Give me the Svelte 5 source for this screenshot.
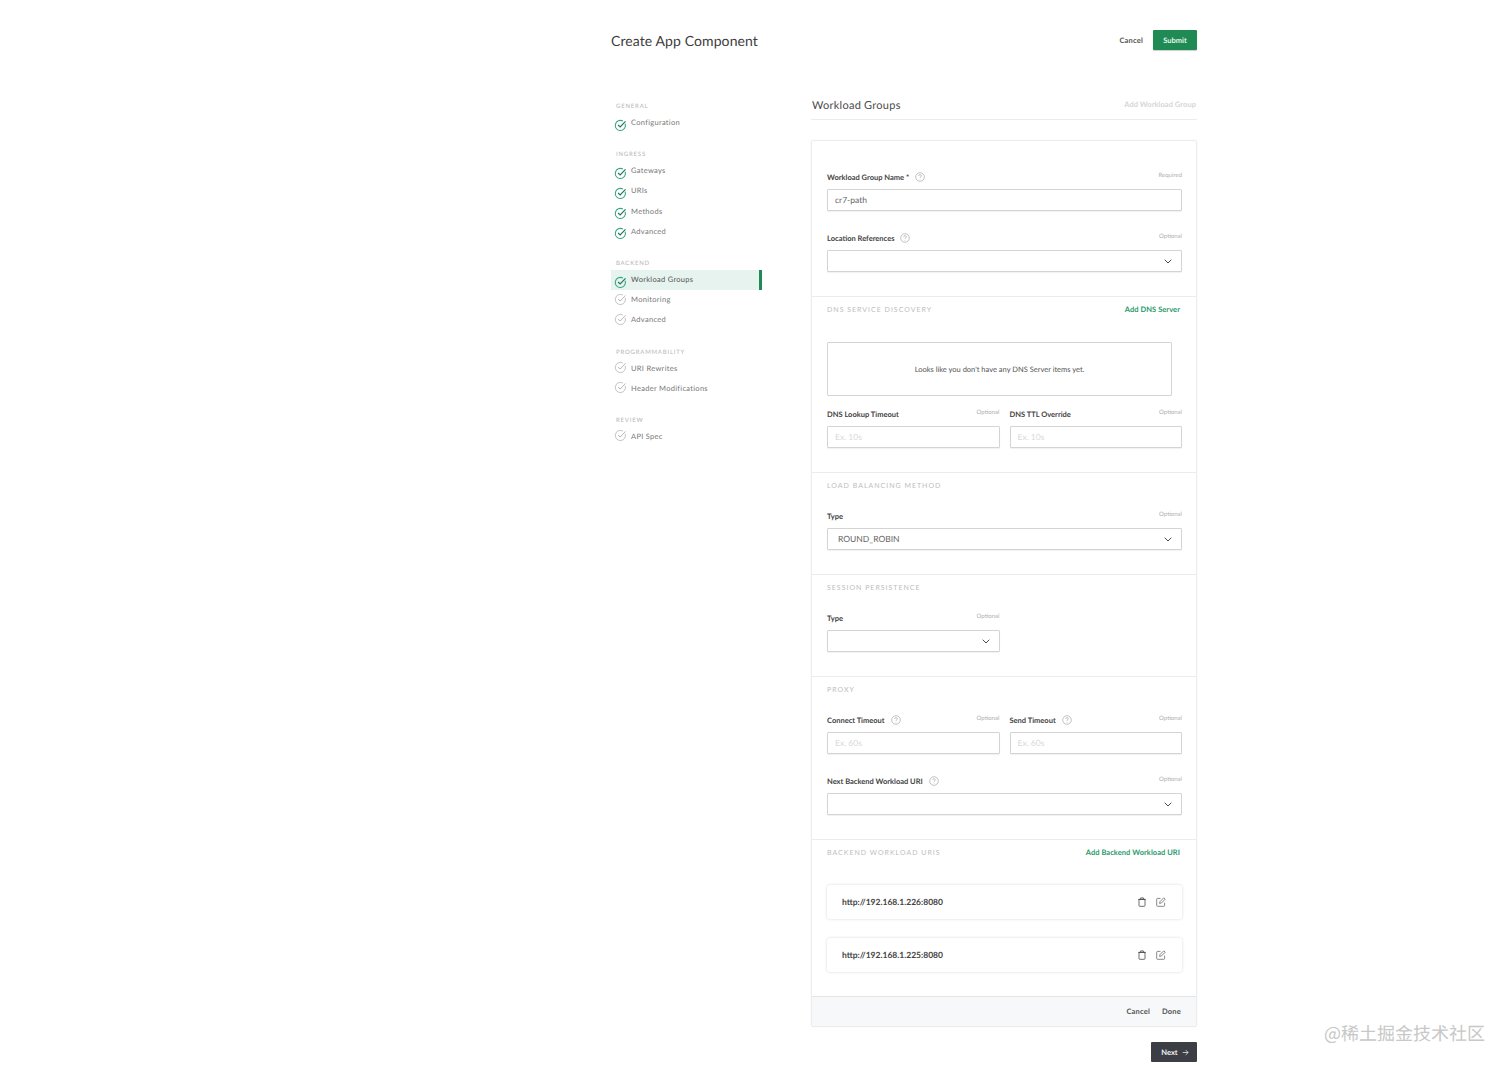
<script>
  const nav = [
    { title: 'General', items: [{ label: 'Configuration', done: true }] },
    {
      title: 'Ingress',
      items: [
        { label: 'Gateways', done: true },
        { label: 'URIs', done: true },
        { label: 'Methods', done: true },
        { label: 'Advanced', done: true }
      ]
    },
    {
      title: 'Backend',
      items: [
        { label: 'Workload Groups', done: true, active: true },
        { label: 'Monitoring' },
        { label: 'Advanced' }
      ]
    },
    {
      title: 'Programmability',
      items: [{ label: 'URI Rewrites' }, { label: 'Header Modifications' }]
    },
    { title: 'Review', items: [{ label: 'API Spec' }] }
  ];

  const uris = ['http://192.168.1.226:8080', 'http://192.168.1.225:8080'];
</script>

{#snippet help()}
  <svg class="help" viewBox="0 0 10 10" width="10" height="10" fill="none" stroke="#9b9b9b" stroke-width="0.6">
    <circle cx="5" cy="5" r="4.3" />
    <path d="M3.7 3.9c0-.8.6-1.3 1.3-1.3s1.3.5 1.3 1.2c0 1-1.3 1-1.3 2.1" />
    <path d="M5 7v.6" />
  </svg>
{/snippet}

{#snippet chevron()}
  <svg class="chevron" viewBox="0 0 8 5" width="8" height="5" fill="none" stroke="#4a4a4a" stroke-width="1">
    <path d="M.7.7 4 4 7.3.7" />
  </svg>
{/snippet}

{#snippet field(label, note, hasHelp)}
  <div class="field-head">
    <span class="field-label">{label}</span>
    {#if hasHelp}{@render help()}{/if}
    <span class="note">{note}</span>
  </div>
{/snippet}

<div class="page">
  <header class="top">
    <h1>Create App Component</h1>
    <div class="top-actions">
      <button class="text-btn">Cancel</button>
      <button class="submit">Submit</button>
    </div>
  </header>

  <div class="layout">
    <aside class="sidebar">
      {#each nav as group}
        <div class="group">
          <div class="group-title">{group.title}</div>
          {#each group.items as item}
            <div class="nav-item" class:active={item.active}>
              <svg viewBox="0 0 12 12" width="13" height="13" fill="none" class:done={item.done}>
                <path class="ring" d="M10.3 4.4A4.7 4.7 0 1 1 8.2 1.9" />
                <path class="tick" d="M3.8 5.5 5.7 7.4 10.6 2.2" />
              </svg>
              <span>{item.label}</span>
            </div>
          {/each}
        </div>
      {/each}
    </aside>

    <main class="content">
      <div class="content-head">
        <h2>Workload Groups</h2>
        <span class="add-group">Add Workload Group</span>
      </div>

      <div class="card">
        <section class="first">
          {@render field('Workload Group Name *', 'Required', true)}
          <input class="input" value="cr7-path" />
          <div class="spaced">
            {@render field('Location References', 'Optional', true)}
            <div class="input select">{@render chevron()}</div>
          </div>
        </section>

        <section class="dns">
          <div class="section-head">
            <span class="section-title">DNS Service Discovery</span>
            <span class="add-link">Add DNS Server</span>
          </div>
          <div class="empty">Looks like you don't have any DNS Server items yet.</div>
          <div class="two-col">
            <div>
              {@render field('DNS Lookup Timeout', 'Optional')}
              <input class="input" placeholder="Ex. 10s" />
            </div>
            <div>
              {@render field('DNS TTL Override', 'Optional')}
              <input class="input" placeholder="Ex. 10s" />
            </div>
          </div>
        </section>

        <section>
          <div class="section-head"><span class="section-title">Load Balancing Method</span></div>
          {@render field('Type', 'Optional')}
          <div class="input select"><span class="select-value">ROUND_ROBIN</span>{@render chevron()}</div>
        </section>

        <section>
          <div class="section-head"><span class="section-title">Session Persistence</span></div>
          <div class="two-col">
            <div>
              {@render field('Type', 'Optional')}
              <div class="input select">{@render chevron()}</div>
            </div>
          </div>
        </section>

        <section>
          <div class="section-head"><span class="section-title">Proxy</span></div>
          <div class="two-col">
            <div>
              {@render field('Connect Timeout', 'Optional', true)}
              <input class="input" placeholder="Ex. 60s" />
            </div>
            <div>
              {@render field('Send Timeout', 'Optional', true)}
              <input class="input" placeholder="Ex. 60s" />
            </div>
          </div>
          <div class="spaced">
            {@render field('Next Backend Workload URI', 'Optional', true)}
            <div class="input select">{@render chevron()}</div>
          </div>
        </section>

        <section class="uris">
          <div class="section-head">
            <span class="section-title">Backend Workload URIs</span>
            <span class="add-link">Add Backend Workload URI</span>
          </div>
          {#each uris as uri}
            <div class="uri-row">
              <span>{uri}</span>
              <svg viewBox="0 0 10 10" width="10" height="10" fill="none" stroke="#4a4a4a" stroke-width="0.8">
                <path d="M2 2.4h6v6.2a.7.7 0 0 1-.7.7H2.7a.7.7 0 0 1-.7-.7z" />
                <path d="M1.2 2.4h7.6M3.6 2.2V.9h2.8v1.3" />
              </svg>
              <svg viewBox="0 0 10 10" width="10" height="10" fill="none" stroke="#6b6b6b" stroke-width="0.8">
                <path d="M8.6 5.6v2.9a.8.8 0 0 1-.8.8H1.5a.8.8 0 0 1-.8-.8V2.2a.8.8 0 0 1 .8-.8h3" />
                <path d="M3.6 6.4 4 4.6 7.8.8l1.4 1.4L5.4 6z" />
              </svg>
            </div>
          {/each}
        </section>

        <footer class="card-foot">
          <button class="text-btn">Cancel</button>
          <button class="text-btn">Done</button>
        </footer>
      </div>

      <div class="next-row">
        <button class="next">
          Next
          <svg viewBox="0 0 8 8" width="7" height="7" fill="none" stroke="#fff" stroke-width="0.8">
            <path d="M.8 4h6.2M4.2 1.2 7 4 4.2 6.8" />
          </svg>
        </button>
      </div>
    </main>
  </div>
</div>

<div class="watermark">@稀土掘金技术社区</div>

<style>
  :global(body) {
    background: #fff;
    font-family: Lato, "Noto Sans", sans-serif;
    color: #4a4a4a;
    text-rendering: geometricPrecision;
  }

  .page {
    width: 586px;
    margin-left: 611px;
    padding-top: 30px;
    box-sizing: border-box;
  }

  .top {
    display: flex;
    align-items: center;
    justify-content: space-between;
    height: 20px;
    margin-bottom: 40px;
  }

  h1 {
    margin: 0;
    font-size: 14px;
    font-weight: 400;
    letter-spacing: 0.1px;
    color: #3c3c3c;
  }

  .top-actions {
    display: flex;
    align-items: center;
    gap: 10px;
  }

  button {
    border: none;
    background: none;
    padding: 0;
    font-family: inherit;
    text-rendering: geometricPrecision;
  }

  .text-btn {
    font-size: 7.5px;
    font-weight: 700;
    color: #555;
    letter-spacing: 0.2px;
  }

  .submit {
    width: 44px;
    height: 20px;
    background: #1f8a53;
    color: #e8f5ee;
    font-size: 7.5px;
    font-weight: 700;
    border-radius: 1px;
    box-shadow: 0 1px 1px rgba(0, 0, 0, 0.2);
  }

  .layout {
    display: flex;
  }

  .sidebar {
    width: 151px;
    margin-right: 49px;
    padding-top: 11px;
    flex: none;
  }

  .group {
    margin-bottom: 16px;
  }

  .group-title {
    height: 12px;
    line-height: 12px;
    padding-left: 5px;
    font-size: 6px;
    text-transform: uppercase;
    letter-spacing: 0.8px;
    color: #b5b5b5;
  }

  .nav-item {
    display: flex;
    align-items: center;
    gap: 4px;
    height: 20.2px;
    padding-left: 3px;
    font-size: 7.5px;
    letter-spacing: 0.3px;
    color: #777;
  }

  .nav-item svg {
    margin-top: -2px;
    flex: none;
  }

  .nav-item svg.done {
    margin-top: 4px;
  }

  .nav-item span {
    margin-top: -1px;
  }

  .nav-item.active {
    background: #e6f3ee;
    border-right: 3px solid #1f8a53;
    color: #555;
  }

  .ring {
    stroke: #b0b0b0;
    stroke-width: 0.7;
  }

  .tick {
    stroke: #a0a0a0;
    stroke-width: 0.7;
  }

  .done .ring {
    stroke: #35a585;
    stroke-width: 1;
  }

  .done .tick {
    stroke: #1f7a5c;
    stroke-width: 1.1;
  }

  .content {
    flex: 1;
    min-width: 0;
  }

  .content-head {
    display: flex;
    align-items: center;
    justify-content: space-between;
    height: 29px;
    padding: 0 1px;
    margin-bottom: 20px;
    border-bottom: 1px solid #ececec;
  }

  h2 {
    margin: 1px 0 0;
    font-size: 11px;
    font-weight: 400;
    letter-spacing: 0.25px;
    color: #4a4a4a;
  }

  .add-group {
    font-size: 7.5px;
    font-weight: 700;
    color: #d6d6d6;
    letter-spacing: 0.05px;
  }

  .card {
    border: 1px solid #ececec;
    border-radius: 2px;
    box-shadow: 0 0 2px rgba(0, 0, 0, 0.06);
  }

  section {
    padding: 0 14px 24px 15px;
    border-bottom: 1px solid #ececec;
  }

  section.first {
    padding-top: 28px;
  }

  .section-head {
    display: flex;
    align-items: center;
    justify-content: space-between;
    height: 24px;
    margin-bottom: 11px;
  }

  .section-title {
    margin-top: 2px;
    font-size: 7px;
    text-transform: uppercase;
    letter-spacing: 1px;
    color: #bdbdbd;
  }

  .add-link {
    margin-right: 2px;
    font-size: 7.5px;
    font-weight: 700;
    letter-spacing: 0.05px;
    color: #2a9a6c;
  }

  .field-head {
    display: flex;
    align-items: center;
    gap: 5px;
    height: 16px;
    margin-bottom: 4px;
  }

  .field-label {
    font-size: 7.5px;
    font-weight: 700;
    color: #444;
  }

  .help {
    flex: none;
    margin-left: 1px;
  }

  .note {
    margin-left: auto;
    margin-top: -4px;
    font-size: 6px;
    color: #b0b0b0;
  }

  .input {
    display: block;
    width: 100%;
    height: 22px;
    box-sizing: border-box;
    padding: 0 7px;
    border: 1px solid #d4d4d4;
    border-radius: 1px;
    background: #fff;
    font-family: inherit;
    font-size: 8.5px;
    color: #666;
    outline: none;
    box-shadow: 0 1px 1px rgba(0, 0, 0, 0.06);
    text-rendering: geometricPrecision;
  }

  .input::placeholder {
    color: #d9d9d9;
  }

  .select {
    display: flex;
    align-items: center;
    justify-content: flex-end;
    padding-right: 9px;
  }

  .select-value {
    margin-right: auto;
    padding-left: 3px;
  }

  .spaced {
    margin-top: 19px;
  }

  .two-col {
    display: grid;
    grid-template-columns: 1fr 1fr;
    gap: 10px;
  }

  .empty {
    display: flex;
    align-items: center;
    justify-content: center;
    width: 345px;
    height: 54px;
    margin: 21px 0 10px;
    box-sizing: border-box;
    border: 1px solid #d4d4d4;
    border-radius: 1px;
    font-size: 7.5px;
    color: #555;
  }

  .uri-row {
    display: flex;
    align-items: center;
    gap: 9px;
    height: 34px;
    margin-bottom: 19px;
    padding: 0 16px 0 15px;
    border-radius: 3px;
    box-shadow: 0 0 3px rgba(0, 0, 0, 0.16);
    font-size: 8.5px;
    font-weight: 700;
    color: #444;
  }

  .uri-row span {
    flex: 1;
  }

  section.uris {
    padding-bottom: 5px;
    border-bottom-color: #e4e4e4;
  }

  section.uris .section-head {
    margin-bottom: 21px;
  }

  .card-foot {
    display: flex;
    align-items: center;
    justify-content: flex-end;
    gap: 12px;
    height: 29px;
    padding-right: 15px;
    background: #f6f8f9;
  }

  .next-row {
    display: flex;
    justify-content: flex-end;
    margin-top: 15px;
  }

  .next {
    display: flex;
    align-items: center;
    justify-content: center;
    gap: 4px;
    width: 46px;
    height: 20px;
    padding-left: 2px;
    background: #3b3f45;
    color: #f2f2f2;
    font-size: 7.5px;
    font-weight: 700;
    border-radius: 1px;
  }

  .watermark {
    position: absolute;
    left: 1324px;
    top: 1020px;
    font-family: "Noto Sans CJK SC", sans-serif;
    font-size: 18px;
    color: #c8c8c8;
    white-space: nowrap;
  }
</style>
